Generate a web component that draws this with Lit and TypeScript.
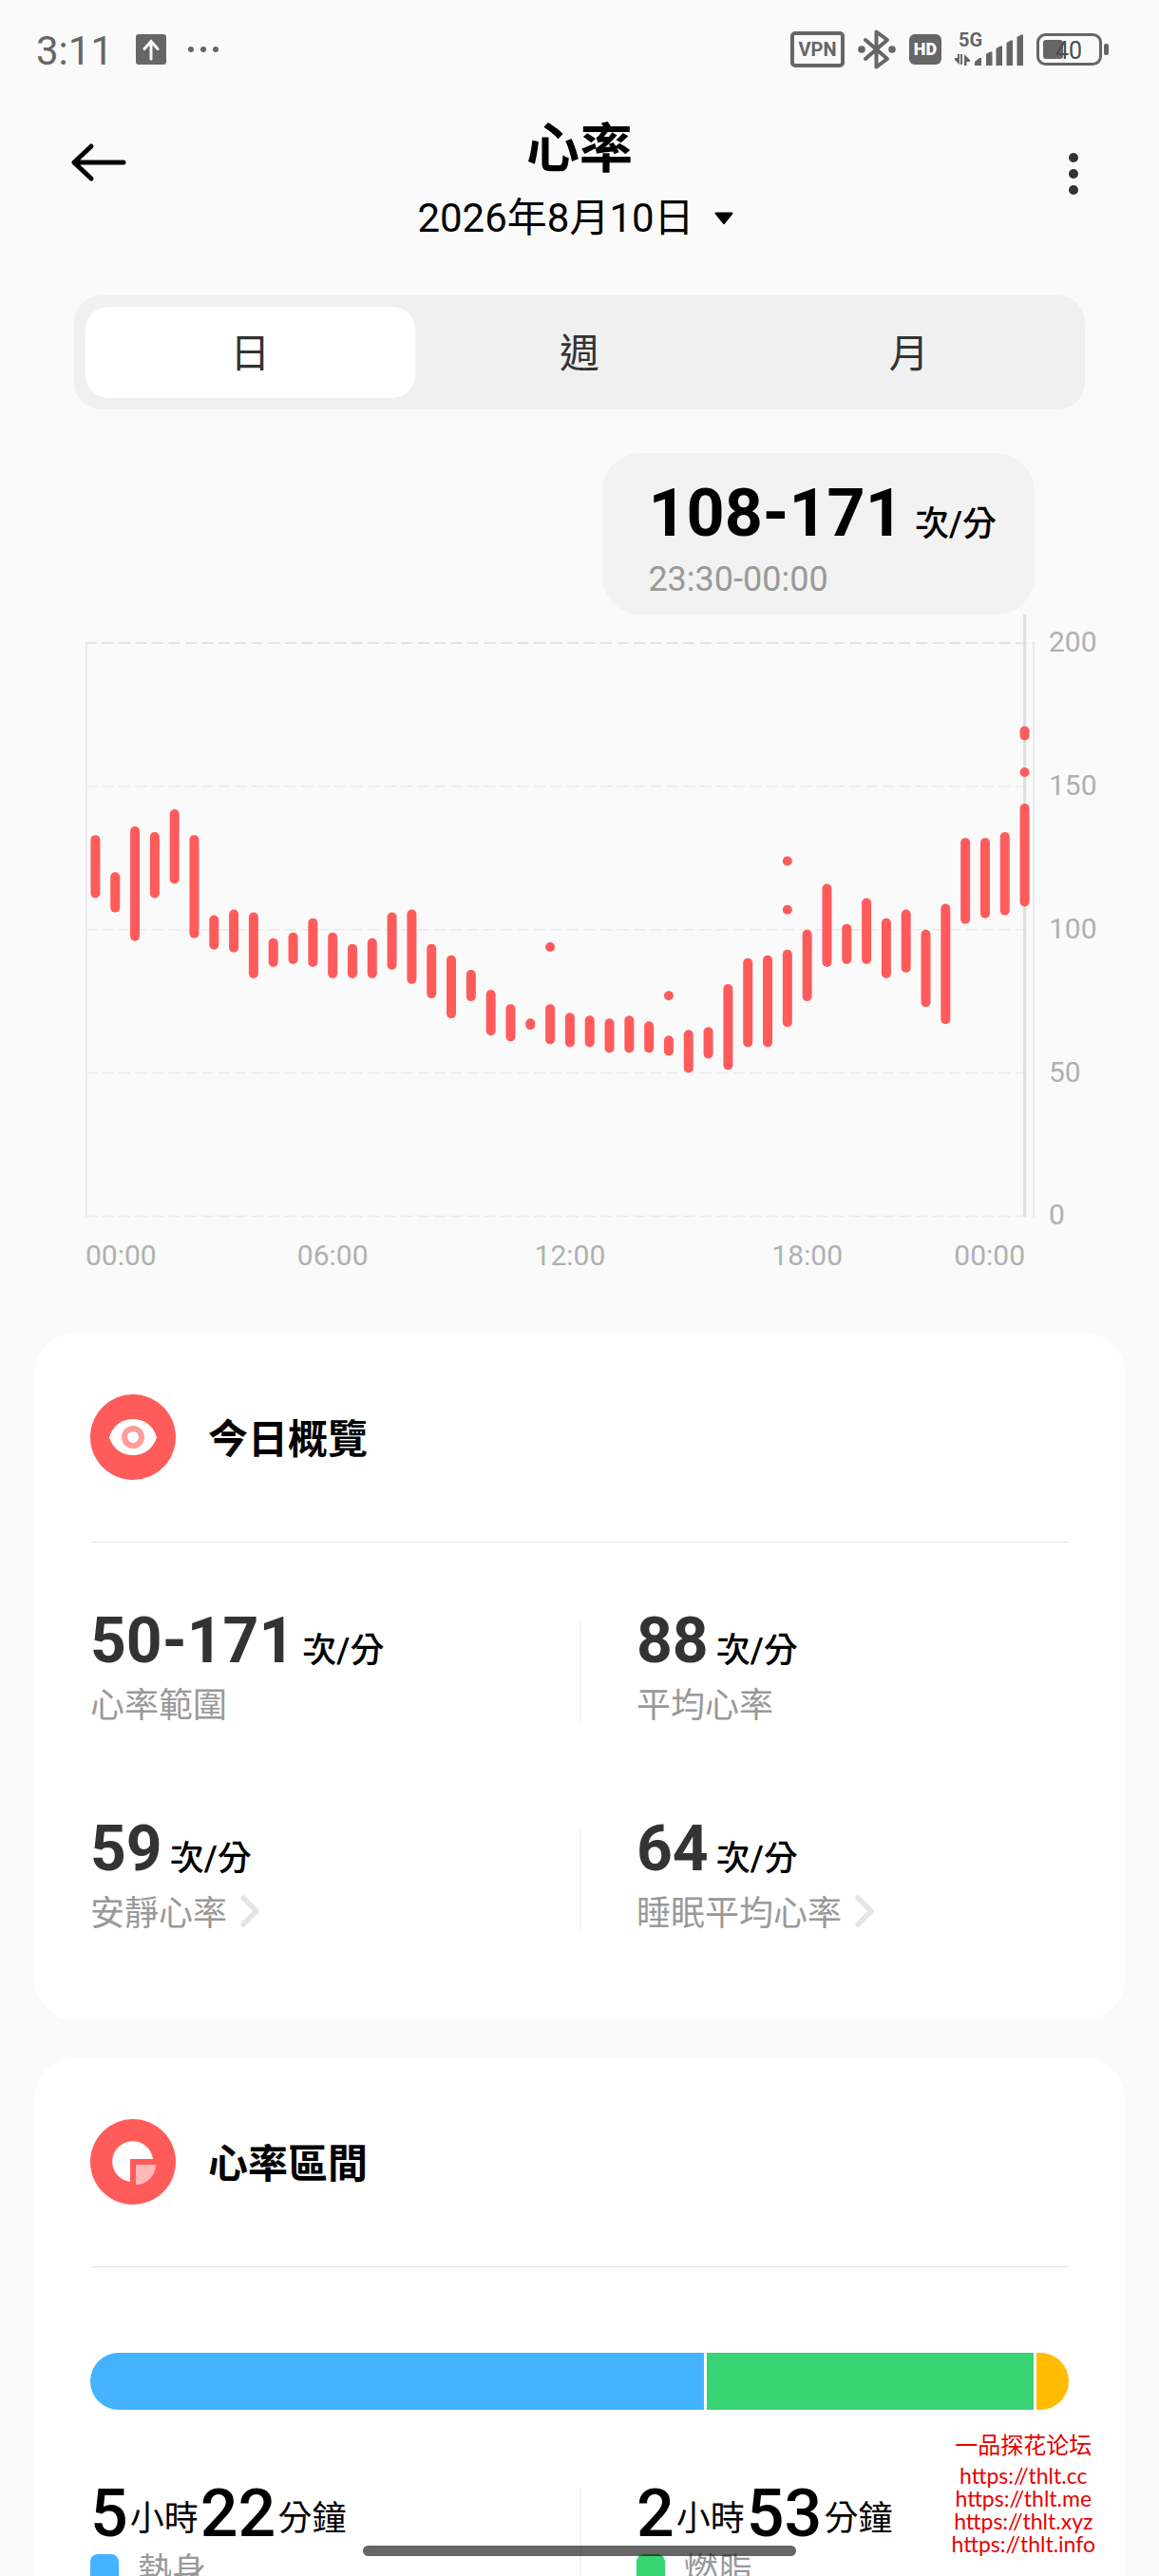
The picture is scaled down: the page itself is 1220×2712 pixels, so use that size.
import { LitElement, html, svg, css } from "lit";
import { customElement, property, state } from "lit/decorators.js";

interface Slot {
  high: number;
  low: number;
  extra?: [number, number][];
}

/** Half-hour heart-rate ranges, from midnight to midnight. */
const SLOTS: Slot[] = [
  { high: 133, low: 111 },
  { high: 120, low: 106 },
  { high: 136, low: 96 },
  { high: 134, low: 111 },
  { high: 142, low: 116 },
  { high: 133, low: 97 },
  { high: 105, low: 93 },
  { high: 107, low: 92 },
  { high: 106, low: 83 },
  { high: 97, low: 87 },
  { high: 99, low: 88 },
  { high: 104, low: 87 },
  { high: 99, low: 83 },
  { high: 95, low: 83 },
  { high: 97, low: 83 },
  { high: 106, low: 86 },
  { high: 107, low: 81 },
  { high: 95, low: 76 },
  { high: 91, low: 69 },
  { high: 86, low: 75 },
  { high: 79, low: 63 },
  { high: 74, low: 61 },
  { high: 69, low: 65 },
  { high: 74, low: 60, extra: [[95.6, 92.3]] },
  { high: 71, low: 59 },
  { high: 70, low: 59 },
  { high: 69, low: 57 },
  { high: 70, low: 57 },
  { high: 68, low: 57 },
  { high: 63, low: 56, extra: [[78.6, 75.3]] },
  { high: 65, low: 50 },
  { high: 66, low: 55 },
  { high: 81, low: 51 },
  { high: 90, low: 59 },
  { high: 91, low: 59 },
  { high: 93, low: 66, extra: [[125.6, 122.3], [108.6, 105.3]] },
  { high: 100, low: 75 },
  { high: 116, low: 87 },
  { high: 102, low: 88 },
  { high: 111, low: 88 },
  { high: 104, low: 83 },
  { high: 107, low: 85 },
  { high: 100, low: 73 },
  { high: 109, low: 67 },
  { high: 132, low: 102 },
  { high: 132, low: 104 },
  { high: 134, low: 105 },
  { high: 144, low: 108, extra: [[156.6, 153.3], [171, 166]] },
];

const PLOT_W = 1000;
const PLOT_H = 604;
const MAX_BPM = 200;
const BAR_W = 10;
const toY = (bpm: number) => ((MAX_BPM - bpm) / MAX_BPM) * PLOT_H;
const toX = (i: number) => ((i + 0.5) * PLOT_W) / SLOTS.length;

@customElement("heart-chart")
export class HeartChart extends LitElement {
  @property({ type: Number }) selected = SLOTS.length - 1;

  static styles = css`
    :host {
      display: block;
      color: #b0b0b0;
      font-size: 30px;
    }
    .grid {
      display: grid;
      grid-template-columns: 1fr 131px;
    }
    .plot {
      display: block;
      width: 100%;
      overflow: visible;
    }
    .scale {
      display: flex;
      flex-direction: column;
      justify-content: space-between;
      margin: -16px 0 -14px;
      padding-left: 15px;
      line-height: 30px;
    }
    .hours {
      display: grid;
      grid-template-columns: 13fr 24fr 24fr 24fr 11fr;
      margin-top: 24px;
      line-height: 36px;
      text-align: center;
    }
    .hours span:first-child {
      text-align: left;
    }
    .hours span:last-child {
      text-align: right;
      padding-right: 10px;
    }
  `;

  private bar(i: number, high: number, low: number) {
    return svg`<rect x=${toX(i) - BAR_W / 2} y=${toY(high)} width=${BAR_W}
      height=${toY(low) - toY(high)} rx="5" fill="#ff5b5b"></rect>`;
  }

  render() {
    return html`
      <div class="grid">
        <svg class="plot" viewBox="0 0 ${PLOT_W} ${PLOT_H}" role="img" aria-label="心率">
          ${[0, 50, 100, 150, 200].map(
            (v) => svg`<line x1="0" x2=${PLOT_W} y1=${toY(v)} y2=${toY(v)}
              stroke=${v === 200 ? "#e2e2e2" : "#ebebeb"} stroke-width=${v === 200 ? 2 : 1.5}
              stroke-dasharray="12 5.5"></line>`
          )}
          <path d="M1 0V604M999 0V604" stroke="#ebebeb" stroke-width="2"></path>
          <line
            x1=${toX(this.selected)}
            x2=${toX(this.selected)}
            y1="-30"
            y2=${PLOT_H}
            stroke="#dedede"
            stroke-width="3"
          ></line>
          ${SLOTS.map((s, i) => [
            this.bar(i, s.high, s.low),
            ...(s.extra ?? []).map(([h, l]) => this.bar(i, h, l)),
          ])}
        </svg>
        <div class="scale">
          ${[200, 150, 100, 50, 0].map((v) => html`<span>${v}</span>`)}
        </div>
        <div class="hours">
          ${["00:00", "06:00", "12:00", "18:00", "00:00"].map((t) => html`<span>${t}</span>`)}
        </div>
      </div>
    `;
  }
}

@customElement("status-bar")
export class StatusBar extends LitElement {
  static styles = css`
    :host {
      display: flex;
      align-items: center;
      justify-content: space-between;
      height: 104px;
      padding: 0 53px 0 38px;
      color: #666;
    }
    .side {
      display: flex;
      align-items: center;
    }
    .time {
      padding-top: 4px;
      margin-right: 24px;
      font-size: 42px;
      line-height: 44px;
    }
    .more {
      margin-left: 22px;
    }
    .right {
      gap: 14px;
    }
    svg {
      display: block;
      overflow: visible;
      fill: currentColor;
    }
  `;

  render() {
    return html`
      <div class="side">
        <span class="time">3:11</span>
        <svg width="32" height="32" viewBox="0 0 32 32">
          <rect x="0" y="0" width="32" height="32" rx="3"></rect>
          <path d="M16 26V8M9 15.5L16 7.5L23 15.5" fill="none" stroke="#fafafa" stroke-width="3"
            stroke-linecap="round"></path>
        </svg>
        <svg class="more" width="36" height="8" viewBox="0 0 36 8">
          <circle cx="4" cy="4" r="3"></circle>
          <circle cx="17" cy="4" r="3"></circle>
          <circle cx="30" cy="4" r="3"></circle>
        </svg>
      </div>
      <div class="side right">
        <svg width="57" height="38" viewBox="0 0 57 38">
          <rect x="2" y="2" width="53" height="34" rx="3" fill="none" stroke="currentColor" stroke-width="4"></rect>
          <text x="28.5" y="26" text-anchor="middle" font-size="20" font-weight="700">VPN</text>
        </svg>
        <svg width="40" height="42" viewBox="0 0 40 42">
          <path d="M8 11L31 31L19.500 39.500V2.500L31 11L8 31" fill="none" stroke="currentColor"
            stroke-width="4" stroke-linejoin="round" stroke-linecap="round"></path>
          <circle cx="4" cy="21" r="3.8"></circle>
          <circle cx="36" cy="21" r="3.8"></circle>
        </svg>
        <svg width="34" height="32" viewBox="0 0 34 32">
          <rect width="34" height="32" rx="6"></rect>
          <text x="17" y="22" text-anchor="middle" font-size="18" font-weight="900" fill="#fafafa">HD</text>
        </svg>
        <svg width="72" height="36" viewBox="0 0 72 36">
          <text x="4" y="15" font-size="20" font-weight="700">5G</text>
          <path d="M5 23V34L0 29V27H3V23ZM6 23H8V34H6ZM10 35V23L16 29V31H12.500V35Z"></path>
          <path d="M21 35V31L26 27H28V35Z"></path>
          <path d="M33 35V23L37 20.500H39.500V35Z"></path>
          <path d="M43.500 35V17L48 14.500H50V35Z"></path>
          <path d="M54.500 35V11L59 8.500H61V35Z"></path>
          <path d="M65.500 35V5L70 2.500H72V35Z"></path>
        </svg>
        <svg width="76" height="34" viewBox="0 0 76 34">
          <rect x="1.500" y="1.500" width="66" height="31" rx="8" fill="none" stroke="currentColor" stroke-width="3"></rect>
          <rect x="7" y="7" width="21" height="20" rx="3"></rect>
          <rect x="71" y="11" width="5" height="12" rx="2"></rect>
          <text x="34" y="27" text-anchor="middle" font-size="25" fill="#4c4c4c">40</text>
        </svg>
      </div>
    `;
  }
}

@customElement("app-root")
export class AppRoot extends LitElement {
  @state() private tab = 0;

  private stats = [
    { value: "50-171", label: "心率範圍", link: false },
    { value: "88", label: "平均心率", link: false },
    { value: "59", label: "安靜心率", link: true },
    { value: "64", label: "睡眠平均心率", link: true },
  ];

  private zones = [
    { label: "熱身", hours: 5, minutes: 22, color: "#45b2ff", share: 646 },
    { label: "燃脂", hours: 2, minutes: 53, color: "#38d373", share: 344 },
    { label: "", hours: 0, minutes: 0, color: "#ffbb00", share: 34 },
  ];

  static styles = css`
    :host {
      display: block;
      position: relative;
      height: 100vh;
      overflow: hidden;
      background: #fafafa;
      color: #000;
      font-family: Roboto, "Noto Sans CJK TC", sans-serif;
    }
    *,
    *::before {
      box-sizing: border-box;
    }
    button {
      margin: 0;
      padding: 0;
      border: 0;
      background: none;
      color: inherit;
      font: inherit;
    }
    h1,
    h2 {
      margin: 0;
    }
    svg {
      display: block;
    }
    .header {
      display: grid;
      grid-template-columns: 72px 1fr 72px;
      padding: 17px 68px 0;
    }
    .icon {
      display: flex;
      align-items: center;
      justify-content: center;
      width: 72px;
      height: 60px;
    }
    .back {
      margin-top: 20px;
    }
    .menu {
      margin-top: 32px;
      padding-left: 28px;
    }
    .heading {
      display: flex;
      flex-direction: column;
      align-items: center;
      gap: 10px;
    }
    .title {
      font-size: 56px;
      line-height: 72px;
      font-weight: 700;
    }
    .date {
      display: flex;
      align-items: center;
      gap: 20px;
      padding-right: 8px;
      font-size: 42px;
      line-height: 54px;
    }
    .tabs {
      display: grid;
      grid-template-columns: repeat(3, 1fr);
      margin: 54px 78px 0;
      padding: 12px;
      border-radius: 28px;
      background: #f0f0f0;
    }
    .tab {
      height: 96px;
      padding-top: 4px;
      border-radius: 24px;
      color: #333;
      font-size: 42px;
      line-height: 54px;
    }
    .tab.active {
      background: #fff;
    }
    .chart {
      display: flex;
      flex-direction: column;
      padding-left: 90px;
      margin-top: 46px;
    }
    .tooltip {
      align-self: flex-end;
      margin: 0 131px 30px 0;
      padding: 36px 40px 16px 48px;
      border-radius: 40px;
      background: #f2f2f2;
    }
    .reading {
      display: flex;
      align-items: baseline;
      gap: 12px;
      line-height: 54px;
      font-size: 70px;
      font-weight: 700;
    }
    .unit {
      color: #000;
      font-size: 36px;
      font-weight: 500;
      line-height: 22px;
    }
    .period {
      margin-top: 22px;
      color: #999;
      font-size: 36px;
      line-height: 42px;
    }
    .cards {
      display: flex;
      flex-direction: column;
      gap: 39px;
      margin: 63px 36px 0;
    }
    .card {
      padding: 0 59px 96px;
      border-radius: 44px;
      background: #fff;
    }
    .card-head {
      display: flex;
      align-items: center;
      gap: 34px;
      padding: 65px 0;
      border-bottom: 1px solid #e5e5e5;
    }
    .card-head h2 {
      padding-top: 6px;
      font-size: 42px;
      font-weight: 700;
      line-height: 54px;
    }
    .cells {
      display: grid;
      grid-template-columns: 1fr 1fr;
      row-gap: 113px;
      padding-top: 82px;
    }
    .cell {
      display: flex;
      flex-direction: column;
      justify-content: space-between;
      height: 106px;
    }
    .cell:nth-child(even) {
      padding-left: 58px;
      border-left: 2px solid #f2f2f2;
    }
    .value {
      display: flex;
      align-items: baseline;
      gap: 8px;
      height: 44px;
      color: #333;
      font-size: 66px;
      font-weight: 700;
      line-height: 44px;
    }
    .label {
      display: flex;
      align-items: center;
      gap: 14px;
      color: #999;
      font-size: 36px;
      line-height: 32px;
    }
    .chevron {
      overflow: visible;
    }
    .zone-bar {
      display: flex;
      gap: 3px;
      height: 60px;
      margin-top: 90px;
      border-radius: 30px;
      overflow: hidden;
    }
    .duration {
      display: flex;
      align-items: flex-end;
      gap: 2px;
      font-size: 36px;
      line-height: 42px;
    }
    .duration b {
      font-size: 70px;
      font-weight: 500;
      line-height: 54px;
    }
    .legend {
      display: flex;
      gap: 20px;
      color: #999;
      font-size: 36px;
      line-height: 36px;
    }
    .swatch {
      width: 30px;
      height: 30px;
      border-radius: 8px;
    }
    .home {
      position: absolute;
      left: 50%;
      bottom: 21px;
      width: 456px;
      height: 11px;
      margin-left: -228px;
      border-radius: 6px;
      background: rgba(0, 0, 0, 0.6);
    }
    .stamp {
      position: absolute;
      right: 67px;
      bottom: 22px;
      color: #e60000;
      font-family: Lato, "Noto Sans CJK SC", sans-serif;
      font-size: 23px;
      line-height: 24px;
      text-align: center;
    }
    .stamp strong {
      display: block;
      margin-bottom: 8px;
      font-size: 24px;
      font-weight: 400;
    }
    .stamp a {
      display: block;
      color: inherit;
      text-decoration: none;
    }
  `;

  private chevron() {
    return html`<svg class="chevron" width="20" height="32" viewBox="0 4 20 32">
      <path d="M3 3L17 17L3 31" fill="none" stroke="#e5e5e5" stroke-width="5.500"
        stroke-linecap="round" stroke-linejoin="round"></path>
    </svg>`;
  }

  render() {
    return html`
      <status-bar></status-bar>
      <header class="header">
        <button class="icon back" aria-label="返回">
          <svg width="60" height="42" viewBox="0 0 60 42">
            <path d="M22 4L4 21L22 38M4 21H56" fill="none" stroke="#000" stroke-width="5"
              stroke-linecap="round" stroke-linejoin="round"></path>
          </svg>
        </button>
        <div class="heading">
          <h1 class="title">心率</h1>
          <button class="date">
            2026年8月10日
            <svg width="22" height="14" viewBox="0 0 22 14">
              <path d="M2.500 1.500H19.500L11 12Z" stroke="#000" stroke-width="2" stroke-linejoin="round"></path>
            </svg>
          </button>
        </div>
        <button class="icon menu" aria-label="更多">
          <svg width="12" height="46" viewBox="0 0 12 46" fill="#333">
            <circle cx="6" cy="6" r="5"></circle>
            <circle cx="6" cy="23" r="5"></circle>
            <circle cx="6" cy="40" r="5"></circle>
          </svg>
        </button>
      </header>

      <div class="tabs" role="tablist">
        ${["日", "週", "月"].map(
          (t, i) => html`<button
            class="tab ${i === this.tab ? "active" : ""}"
            role="tab"
            aria-selected=${i === this.tab}
            @click=${() => (this.tab = i)}
          >${t}</button>`
        )}
      </div>

      <section class="chart">
        <div class="tooltip">
          <div class="reading">108-171<span class="unit">次/分</span></div>
          <div class="period">23:30-00:00</div>
        </div>
        <heart-chart></heart-chart>
      </section>

      <main class="cards">
        <section class="card">
          <div class="card-head">
            <svg width="90" height="90" viewBox="0 0 90 90">
              <circle cx="45" cy="45" r="45" fill="#ff5b5b"></circle>
              <path d="M20 45C24 32 34 26 45 26S66 32 70 45C66 58 56 64 45 64S24 58 20 45Z" fill="#fff"></path>
              <circle cx="45" cy="45" r="9" fill="none" stroke="#ff9c9c" stroke-width="6"></circle>
            </svg>
            <h2>今日概覽</h2>
          </div>
          <div class="cells">
            ${this.stats.map(
              (s) => html`<div class="cell">
                <div class="value">${s.value}<span class="unit">次/分</span></div>
                ${s.link
                  ? html`<button class="label">${s.label}${this.chevron()}</button>`
                  : html`<div class="label">${s.label}</div>`}
              </div>`
            )}
          </div>
        </section>

        <section class="card">
          <div class="card-head">
            <svg width="90" height="90" viewBox="0 0 90 90">
              <circle cx="45" cy="45" r="45" fill="#ff5b5b"></circle>
              <path d="M42 66A21.500 21.500 0 1 1 66 42H42Z" fill="#fff"></path>
              <path d="M48 48H69A21 21 0 0 1 48 69Z" fill="#ffb9b9"></path>
            </svg>
            <h2>心率區間</h2>
          </div>
          <div class="zone-bar">
            ${this.zones.map(
              (z) => html`<div style="flex:${z.share} 1 0;background:${z.color}"></div>`
            )}
          </div>
          <div class="cells">
            ${this.zones.slice(0, 2).map(
              (z) => html`<div class="cell">
                <div class="duration"><b>${z.hours}</b>小時<b>${z.minutes}</b>分鐘</div>
                <div class="legend">
                  <span class="swatch" style="background:${z.color}"></span>${z.label}
                </div>
              </div>`
            )}
          </div>
        </section>
      </main>

      <div class="home"></div>
      <aside class="stamp">
        <strong>一品探花论坛</strong>
        ${["cc", "me", "xyz", "info"].map(
          (d) => html`<a href="https://thlt.${d}">https://thlt.${d}</a>`
        )}
      </aside>
    `;
  }
}
